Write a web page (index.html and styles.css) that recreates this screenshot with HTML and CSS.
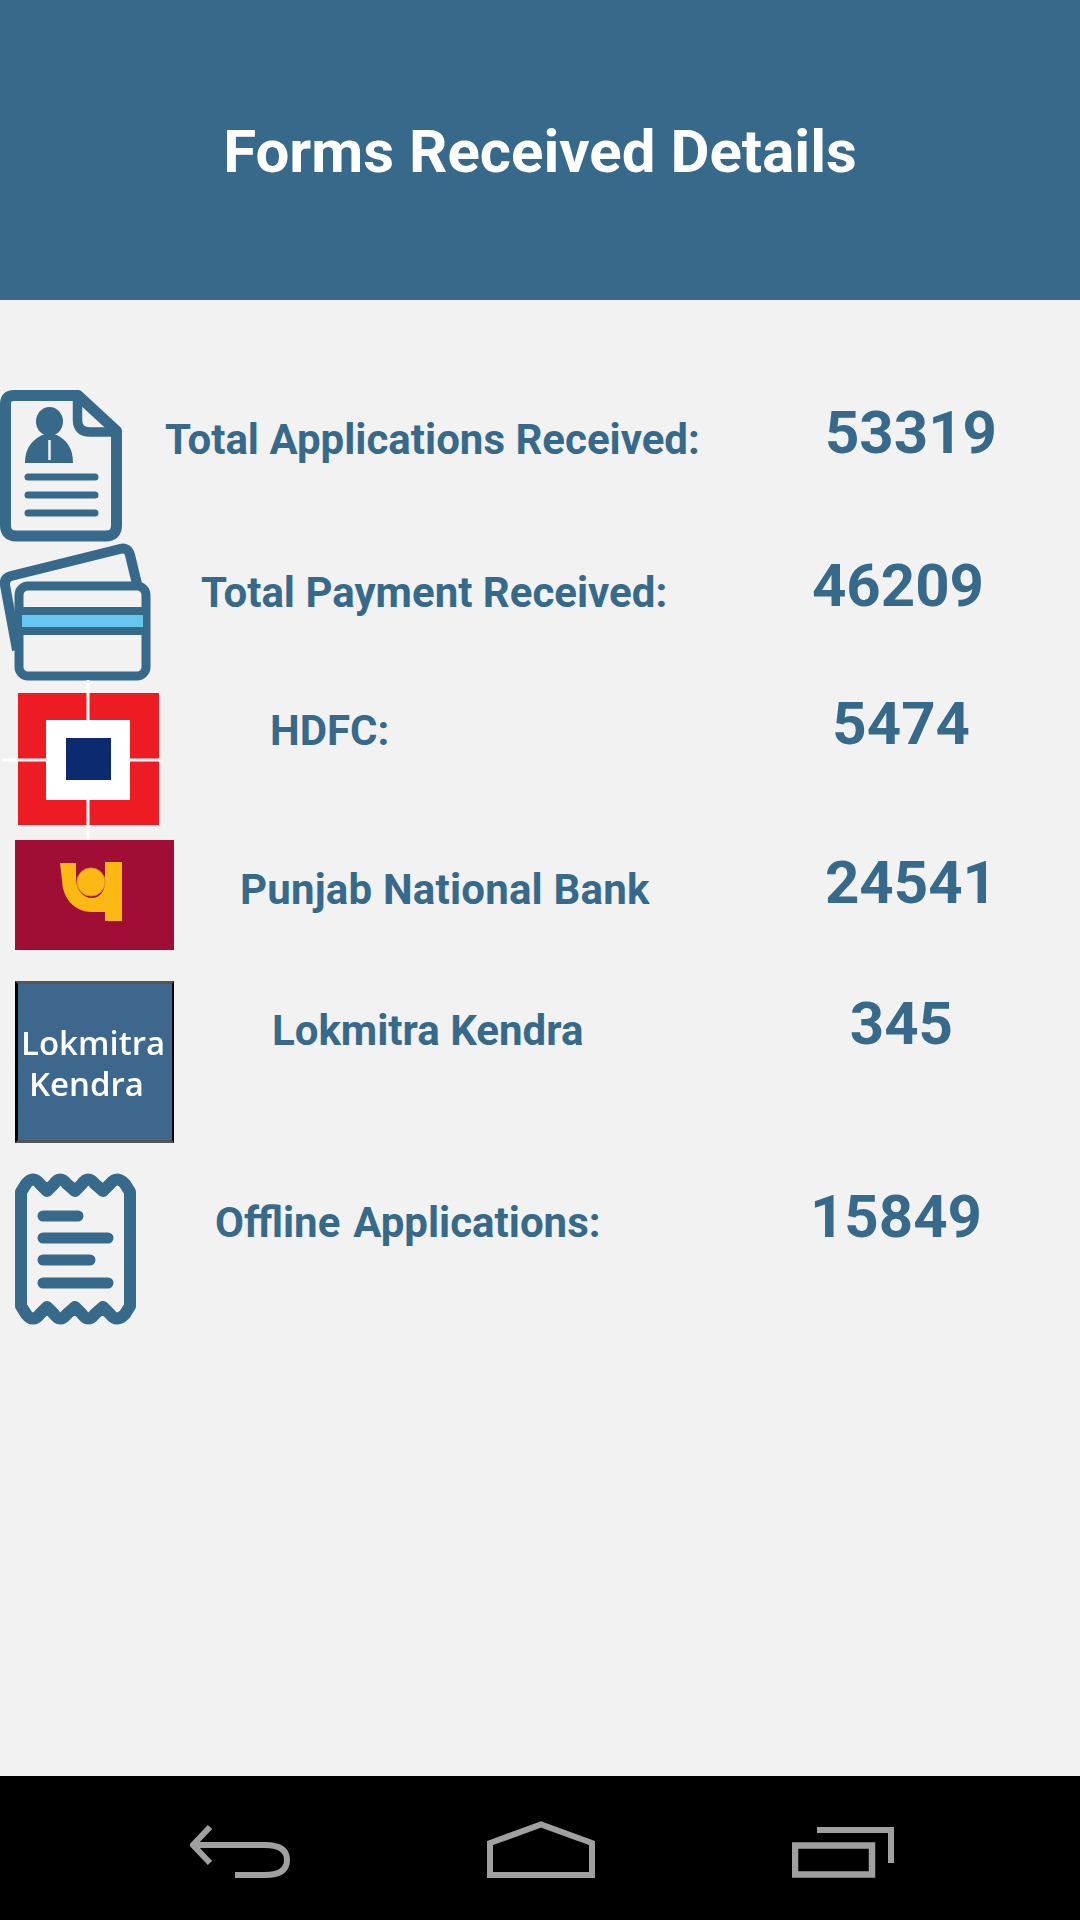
FILE: index.html
```html
<!DOCTYPE html>
<html lang="en">
<head>
<meta charset="utf-8">
<title>Forms Received Details</title>
<link rel="stylesheet" href="styles.css">
</head>
<body>
<div class="screen">
  <header class="header"><h1 class="title">Forms Received Details</h1></header>
  <main class="list">
    <section class="row row-total">
      <svg class="icon icon-doc" viewBox="0 390 125 153">
        <path class="line" d="M14 395.500H78L116.500 431V525Q116.500 536 106 536H16Q5.500 536 5.500 525V404Q5.500 395.500 14 395.500Z" stroke-width="11"/>
        <path class="line" d="M77.500 397V420Q77.500 432 90 432H116" stroke-width="9.500"/>
        <ellipse class="fill" cx="49.500" cy="421.500" rx="13.500" ry="14.500"/>
        <path class="fill" d="M25 463C25 447 33 440 42 435H57C66 440 73 447 73 463Z"/>
        <path class="tie" d="M49.500 440V460" stroke-width="2.500"/>
        <path class="line cap" d="M28 477H95M28 495H95M28 513H95" stroke-width="7"/>
      </svg>
      <span class="label">Total Applications Received:</span>
      <span class="value">53319</span>
    </section>
    <section class="row row-payment">
      <svg class="icon icon-card" viewBox="0 543 153 138">
        <path class="line" d="M17 650L5 585Q4 578 11 576L120 549Q128 547 130 555L137 584" stroke-width="10"/>
        <rect class="line" x="19" y="586" width="127" height="90" rx="9" stroke-width="9"/>
        <rect class="stripe" x="22" y="614" width="121" height="14"/>
        <path class="line" d="M20 611H145M20 631H145" stroke-width="8"/>
      </svg>
      <span class="label">Total Payment Received:</span>
      <span class="value">46209</span>
    </section>
    <section class="row row-hdfc">
      <svg class="icon icon-hdfc" viewBox="0 680 162 160">
        <rect class="hdfc-red" x="18" y="693" width="141" height="132"/>
        <path class="hdfc-gap" d="M88 680V840M2 760H159" stroke-width="3"/>
        <rect class="hdfc-white" x="46" y="720" width="84" height="80"/>
        <rect class="hdfc-blue" x="66" y="738" width="45" height="42"/>
      </svg>
      <span class="label">HDFC:</span>
      <span class="value">5474</span>
    </section>
    <section class="row row-pnb">
      <svg class="icon icon-pnb" viewBox="15 840 159 110">
        <rect class="pnb-bg" x="15" y="840" width="159" height="110"/>
        <path class="pnb-mark" d="M60 863H76V878C76 890 83 898 92 898C99 898 105 892 105 882V862H122V921H105V912H92C72 912 62 895 62 880Z"/>
        <circle class="pnb-dot" cx="91" cy="882" r="14"/>
      </svg>
      <span class="label">Punjab National Bank</span>
      <span class="value">24541</span>
    </section>
    <section class="row row-lok">
      <div class="icon lok-badge">
        <span class="lok-one">Lokmitra</span>
        <span class="lok-two">Kendra</span>
      </div>
      <span class="label">Lokmitra Kendra</span>
      <span class="value">345</span>
    </section>
    <section class="row row-offline">
      <svg class="icon icon-receipt" viewBox="15 1173 122 153">
        <path class="line" d="M21 1192L26 1184Q33 1175 40 1184L47 1191L54 1184Q60 1175 67 1184L75 1191L82 1184Q88 1175 95 1184L103 1191L110 1184Q117 1175 125 1184L130 1192V1306L125 1314Q117 1323 110 1314L103 1307L95 1314Q88 1323 82 1314L75 1307L67 1314Q60 1323 54 1314L47 1307L40 1314Q33 1323 26 1314L21 1306Z" stroke-width="12"/>
        <path class="line cap" d="M43 1216H78M43 1238H108M43 1260H90M43 1283H108" stroke-width="11"/>
      </svg>
      <span class="label">Offline Applications:</span>
      <span class="value">15849</span>
    </section>
  </main>
  <nav class="navbar">
    <svg class="nav-icon nav-back" viewBox="0 0 100 57">
      <path class="nav-line" d="M20 6L3 24L20 42" stroke-width="6"/>
      <path class="nav-line" d="M3 24H75Q97 24 97 39Q97 54 75 54H45" stroke-width="6"/>
    </svg>
    <svg class="nav-icon nav-home" viewBox="0 0 108 57">
      <path class="nav-line" d="M3 54V22L54 3.500L105 22V54Z" stroke-width="6"/>
      <path class="nav-line" d="M0 54H108" stroke-width="6"/>
    </svg>
    <svg class="nav-icon nav-recent" viewBox="0 0 102 57">
      <path class="nav-line" d="M25 9H99V42" stroke-width="6"/>
      <path class="nav-line" d="M3 24.500H80V53.500H3Z" stroke-width="6.500"/>
    </svg>
  </nav>
</div>
</body>
</html>
```
FILE: styles.css
```css
* { box-sizing: border-box; }
html, body { margin: 0; padding: 0; }
body { font-family: Roboto, "Liberation Sans", sans-serif; background: #f2f2f2; }
.screen { width: 1080px; height: 1920px; display: flex; flex-direction: column; overflow: hidden; }
.header { height: 300px; background: #376a8a; display: flex; justify-content: center; padding-top: 117px; }
.title { margin: 0; color: #fff; font-size: 60px; line-height: 70px; font-weight: 700; }
.list { flex: 1; padding-top: 90px; }

.row { display: flex; align-items: flex-start; color: #376a8a; font-weight: 700; }
.label { font-size: 42px; line-height: 48px; white-space: nowrap; }
.value { font-size: 60px; line-height: 70px; white-space: nowrap; margin-left: auto; }
.icon { display: block; flex: none; }

.line { fill: none; stroke: #376a8a; stroke-linejoin: round; }
.fill { fill: #376a8a; }
.cap { stroke-linecap: round; }
.tie { stroke: #f2f2f2; fill: none; }
.stripe { fill: #66c8ef; }

.row-total { height: 153px; padding-right: 83px; }
.icon-doc { width: 125px; height: 153px; filter: blur(.6px); }
.row-total .label { margin: 26px 0 0 40px; }
.row-total .value { margin-top: 8px; }

.row-payment { height: 150px; padding-right: 96px; }
.icon-card { width: 153px; height: 138px; filter: blur(.6px); }
.row-payment .label { margin: 26px 0 0 48px; }
.row-payment .value { margin-top: 8px; }

.row-hdfc { height: 147px; padding-right: 110px; }
.icon-hdfc { width: 162px; height: 160px; margin-top: -13px; filter: blur(.6px); }
.hdfc-red { fill: #ed1c24; }
.hdfc-white { fill: #fff; }
.hdfc-blue { fill: #0b2a6f; }
.hdfc-gap { stroke: #fff; fill: none; }
.row-hdfc .label { margin: 14px 0 0 108px; }
.row-hdfc .value { margin-top: -4px; }

.row-pnb { height: 141px; padding: 0 83px 0 15px; }
.icon-pnb { width: 159px; height: 110px; filter: blur(.6px); }
.pnb-bg { fill: #a00d35; }
.pnb-mark { fill: #fdb913; }
.pnb-dot { fill: #fdb913; stroke: #e0961a; stroke-width: 1; }
.row-pnb .label { margin: 26px 0 0 66px; letter-spacing: .2px; }
.row-pnb .value { margin-top: 8px; }

.row-lok { height: 192px; padding: 0 127px 0 15px; }
.lok-badge { width: 159px; height: 162px; background: #3d678c; border: 3px solid #000; border-top-color: #555; border-bottom-color: #555; border-right-width: 2px; color: #fff; display: flex; flex-direction: column; font-family: "Open Sans", sans-serif; font-weight: 600; font-size: 33px; line-height: 41px; padding-top: 38px; filter: blur(.7px); }
.lok-one { margin-left: 3px; }
.lok-two { margin-left: 11px; }
.row-lok .label { margin: 26px 0 0 98px; }
.row-lok .value { margin-top: 8px; }

.row-offline { height: 153px; padding: 0 98px 0 15px; }
.icon-receipt { width: 122px; height: 153px; filter: blur(.6px); }
.row-offline .label { margin: 26px 0 0 78px; word-spacing: 2.4px; }
.row-offline .value { margin-top: 9px; }

.navbar { height: 144px; background: #000; display: flex; align-items: flex-start; gap: 197px; padding: 45px 0 0 190px; }
.nav-icon { display: block; height: 57px; flex: none; }
.nav-back { width: 100px; }
.nav-home { width: 108px; }
.nav-recent { width: 102px; }
.nav-line { fill: none; stroke: #a0a0a0; }
```
